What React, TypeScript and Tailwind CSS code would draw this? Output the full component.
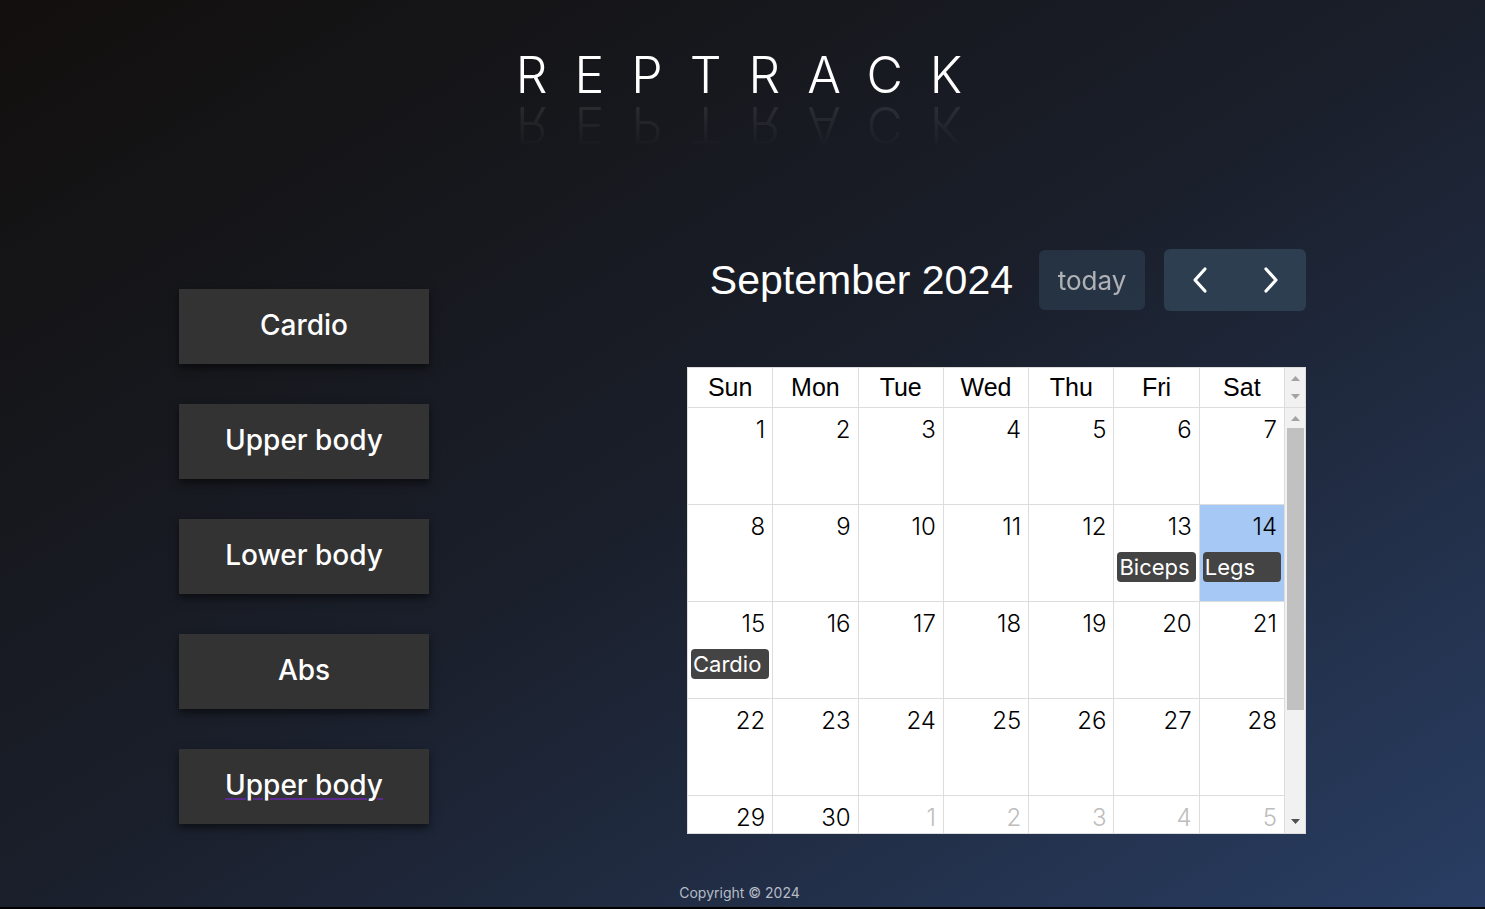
import React from 'react'

const workouts = ['Cardio', 'Upper body', 'Lower body', 'Abs', 'Upper body']
const dayNames = ['Sun', 'Mon', 'Tue', 'Wed', 'Thu', 'Fri', 'Sat']

type Day = { n: number; other?: boolean }

const weeks: Day[][] = [
  [1, 2, 3, 4, 5, 6, 7].map((n) => ({ n })),
  [8, 9, 10, 11, 12, 13, 14].map((n) => ({ n })),
  [15, 16, 17, 18, 19, 20, 21].map((n) => ({ n })),
  [22, 23, 24, 25, 26, 27, 28].map((n) => ({ n })),
  [{ n: 29 }, { n: 30 }, ...[1, 2, 3, 4, 5].map((n) => ({ n, other: true }))],
]

const events: Record<number, string> = { 13: 'Biceps', 14: 'Legs', 15: 'Cardio' }
const TODAY = 14

function ArrowUp({ color = '#a3a3a3' }: { color?: string }) {
  return (
    <svg width="9" height="5" viewBox="0 0 9 5">
      <path d="M0 5 L4.5 0 L9 5 Z" fill={color} />
    </svg>
  )
}

function ArrowDown({ color = '#a3a3a3' }: { color?: string }) {
  return (
    <svg width="9" height="5" viewBox="0 0 9 5">
      <path d="M0 0 L4.5 5 L9 0 Z" fill={color} />
    </svg>
  )
}

function Chevron({ dir }: { dir: 'left' | 'right' }) {
  return (
    <svg width="18" height="28" viewBox="0 0 18 28">
      <path
        d={dir === 'left' ? 'M14 3 L4 14 L14 25' : 'M4 3 L14 14 L4 25'}
        stroke="white"
        strokeWidth="3.2"
        fill="none"
        strokeLinecap="round"
        strokeLinejoin="round"
      />
    </svg>
  )
}

function DayCell({ day }: { day: Day }) {
  const isToday = !day.other && day.n === TODAY
  const ev = !day.other ? events[day.n] : undefined
  return (
    <div className={`h-[97px] border-r border-b border-[#ddd] ${isToday ? 'bg-[#a6c8f5]' : 'bg-white'}`}>
      <div
        className={`pt-[6px] pr-[7px] text-right text-[24px] leading-[32px] font-light ${
          day.other ? 'text-[#bdbdbd]' : 'text-black'
        }`}
      >
        {day.n}
      </div>
      {ev && (
        <div className="mx-[3px] mt-[9px] h-[30px] rounded-[4px] bg-[#444] pl-[2px] text-[22px] leading-[30px] text-white">
          {ev}
        </div>
      )}
    </div>
  )
}

function Calendar() {
  return (
    <div className="w-[619px]">
      <div className="flex h-[62px] items-center justify-end">
        <h2 className="mr-[26px] font-['Liberation_Sans',Arial,sans-serif] text-[41px] leading-none text-white">
          September 2024
        </h2>
        <button className="mr-[19px] h-[60px] w-[106px] rounded-[6px] bg-[#2c3e50] text-[26px] text-white opacity-65">
          today
        </button>
        <div className="flex h-[62px] overflow-hidden rounded-[6px] bg-[#2c3e50]">
          <button className="flex w-[71px] items-center justify-center">
            <Chevron dir="left" />
          </button>
          <button className="flex w-[71px] items-center justify-center">
            <Chevron dir="right" />
          </button>
        </div>
      </div>

      <div className="mt-[56px] flex h-[467px] flex-col overflow-hidden border border-[#ddd] bg-white">
        <div className="flex h-[40px] shrink-0 border-b border-[#ddd]">
          <div className="grid w-[597px] grid-cols-7">
            {dayNames.map((d) => (
              <div
                key={d}
                className="border-r border-[#ddd] text-center font-['Liberation_Sans',Arial,sans-serif] text-[25px] leading-[39px] text-black"
              >
                {d}
              </div>
            ))}
          </div>
          <div className="flex flex-1 flex-col items-center bg-[#f1f1f1] pt-[8px]">
            <ArrowUp />
            <div className="mt-[13px]">
              <ArrowDown />
            </div>
          </div>
        </div>

        <div className="flex min-h-0 flex-1">
          <div className="grid w-[597px] grid-cols-7 content-start overflow-hidden">
            {weeks.flat().map((day, i) => (
              <DayCell key={i} day={day} />
            ))}
          </div>
          <div className="flex flex-1 flex-col items-center bg-[#f1f1f1]">
            <div className="pt-[8px]">
              <ArrowUp />
            </div>
            <div className="mt-[7px] h-[282px] w-[17px] bg-[#c1c1c1]" />
            <div className="mt-auto mb-[9px]">
              <ArrowDown color="#505050" />
            </div>
          </div>
        </div>
      </div>
    </div>
  )
}

export default function App() {
  return (
    <div className="flex h-[909px] w-full flex-col border-b-2 border-black bg-linear-to-br from-[#120f0d] via-[#1a1f2b] to-[#293e64] font-['Inter',sans-serif]">
      <header className="flex flex-col items-center pt-[50px] pl-[20px]">
        <h1 className="text-[50px] leading-none font-light tracking-[27px] text-white">REPTRACK</h1>
        <div
          aria-hidden
          className="-scale-y-100 bg-linear-to-t from-white/10 via-white/5 to-white/0 bg-clip-text text-[50px] leading-none font-light tracking-[27px] text-transparent"
        >
          REPTRACK
        </div>
      </header>

      <main className="mt-[99px] flex justify-between px-[179px]">
        <div className="flex flex-col gap-[40px] pt-[40px]">
          {workouts.map((w, i) => (
            <button
              key={i}
              className="h-[75px] w-[250px] bg-[#333] pb-[3px] text-[28px] font-medium text-white shadow-[0_4px_8px_rgba(0,0,0,0.55)]"
            >
              <span
                className={
                  i === workouts.length - 1
                    ? 'underline decoration-[#5b2a8f] decoration-2 underline-offset-[3px]'
                    : ''
                }
              >
                {w}
              </span>
            </button>
          ))}
        </div>
        <Calendar />
      </main>

      <footer className="mt-[48px] pr-[6px] text-center text-[14px] text-[#b5bcc7]">Copyright © 2024</footer>
    </div>
  )
}
